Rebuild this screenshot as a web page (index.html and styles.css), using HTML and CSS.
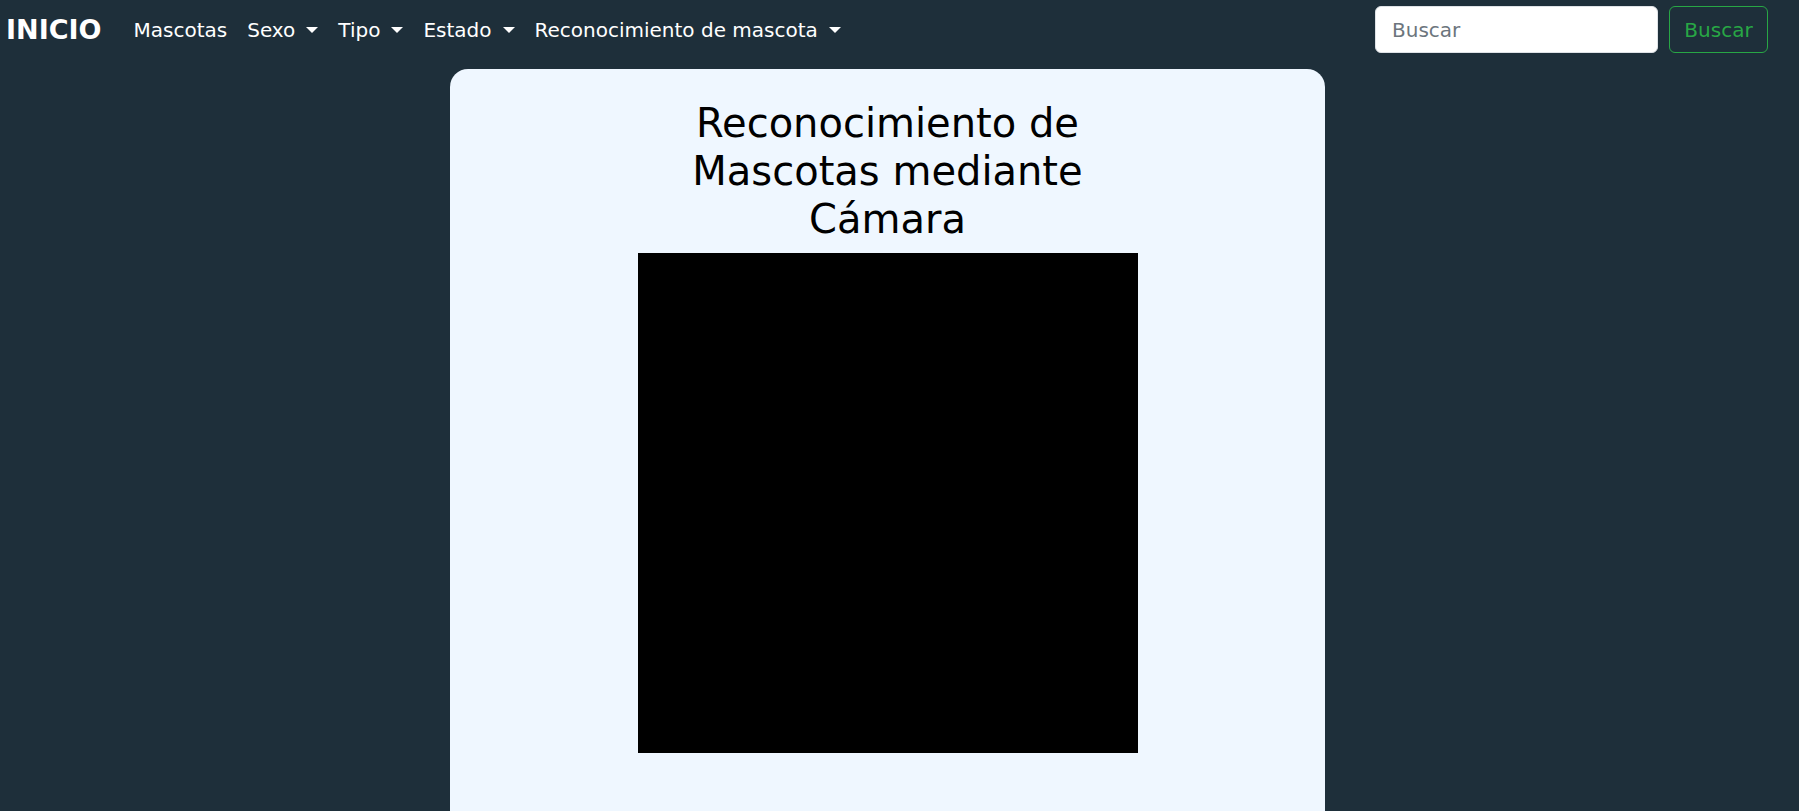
FILE: index.html
```html
<!DOCTYPE html>
<html lang="es">
<head>
    <meta charset="UTF-8">
    <title>Reconocimiento de Mascotas</title>
    <link rel="stylesheet" href="styles.css">
</head>
<body>
<nav class="navbar">
    <a class="brand" href="#">INICIO</a>
    <ul class="nav-links">
        <li><a class="nav-link" href="#">Mascotas</a></li>
        <li><a class="nav-link dropdown" href="#">Sexo</a></li>
        <li><a class="nav-link dropdown" href="#">Tipo</a></li>
        <li><a class="nav-link dropdown" href="#">Estado</a></li>
        <li><a class="nav-link dropdown" href="#">Reconocimiento de mascota</a></li>
    </ul>
    <form class="search">
        <input class="search-input" type="search" placeholder="Buscar">
        <button class="search-btn" type="button">Buscar</button>
    </form>
</nav>

<main class="page">
    <section class="card">
        <h1 class="card-title">Reconocimiento de Mascotas mediante Cámara</h1>
        <div class="camera"></div>
    </section>
</main>
</body>
</html>
```

FILE: styles.css
```css
* {
    box-sizing: border-box;
}
body {
    margin: 0;
    height: 811px;
    overflow: hidden;
    background: #1e2f3a;
    font-family: "DejaVu Sans", "Open Sans", sans-serif;
    color: #000;
}
a {
    text-decoration: none;
    color: #fff;
}

/* barra superior */
.navbar {
    display: flex;
    align-items: center;
    height: 59px;
    padding: 0 31px 0 6px;
}
.brand {
    font-size: 27px;
    font-weight: 700;
    margin-right: 22px;
}
.nav-links {
    display: flex;
    align-items: center;
    list-style: none;
    margin: 0;
    padding: 0;
}
.nav-link {
    display: block;
    padding: 0 10px;
    font-size: 20px;
    line-height: 30px;
}
.nav-link.dropdown::after {
    content: "";
    display: inline-block;
    margin-left: 11px;
    vertical-align: 4px;
    border-top: 6px solid #fff;
    border-left: 6px solid transparent;
    border-right: 6px solid transparent;
}
.search {
    display: flex;
    gap: 11px;
    margin-left: auto;
}
.search-input {
    width: 283px;
    height: 47px;
    padding: 0 16px;
    border: 1px solid #dee2e6;
    border-radius: 6px;
    background: #fff;
    font: inherit;
    font-size: 20px;
}
.search-input::placeholder {
    color: #6c757d;
}
.search-btn {
    width: 99px;
    height: 47px;
    border: 1px solid #28a745;
    border-radius: 6px;
    background: transparent;
    color: #28a745;
    font: inherit;
    font-size: 20px;
}

/* tarjeta central */
.page {
    display: flex;
    justify-content: center;
    padding: 10px 24px 0 0;
}
.card {
    width: 875px;
    height: 780px;
    padding-top: 30px;
    background: #eff7ff;
    border-radius: 18px;
    display: flex;
    flex-direction: column;
    align-items: center;
}
.card-title {
    max-width: 440px;
    margin: 0 0 10px;
    font-size: 40px;
    font-weight: 400;
    line-height: 48px;
    text-align: center;
}
.camera {
    width: 500px;
    height: 500px;
    background: #000;
}
```
